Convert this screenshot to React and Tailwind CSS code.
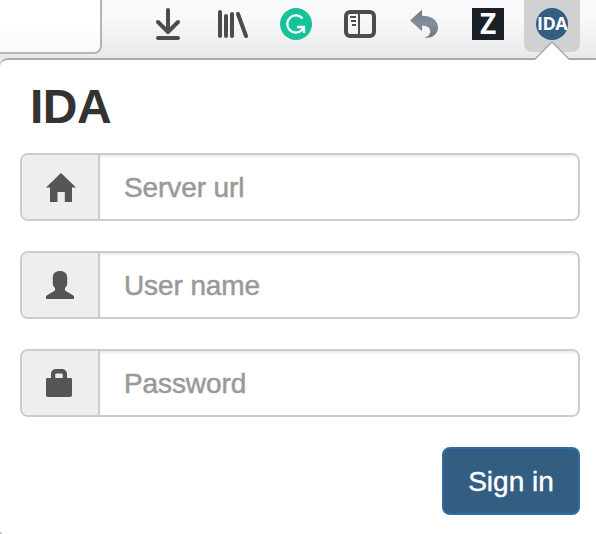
import React from "react";

function DownloadIcon() {
  return (
    <svg className="size-8" viewBox="0 0 32 32" fill="none" stroke="#4c4c4e" strokeWidth="4" strokeLinecap="round" strokeLinejoin="round">
      <path d="M16 2v22M6 14l10 10 10-10M6 30h20" />
    </svg>
  );
}

function LibraryIcon() {
  return (
    <svg className="size-8" viewBox="0 0 32 32" fill="none" stroke="#4c4c4e" strokeWidth="4" strokeLinecap="round">
      <path d="M4 4v24M10 8v20M16 6v22M22 6l8 22" />
    </svg>
  );
}

function GrammarIcon() {
  return (
    <svg className="size-8" viewBox="0 0 32 32" fill="none" stroke="#fff" strokeWidth="2.3">
      <circle cx="16" cy="16" r="16" fill="#15c39a" stroke="none" />
      <path d="M22.500 10.500A8.600 8.600 0 1 0 22 22L24 19" />
      <path d="M17 19h7v6" />
    </svg>
  );
}

function SidebarIcon() {
  return (
    <svg className="size-8" viewBox="0 0 32 32" fill="none" stroke="#4c4c4e">
      <rect x="2" y="4" width="28" height="24" rx="4" strokeWidth="4" />
      <path d="M15 5v22M6 9h6M7 13h5M8 17h4" strokeWidth="2" />
    </svg>
  );
}

function UndoIcon() {
  return (
    <svg className="size-8" viewBox="0 0 32 32">
      <defs>
        <linearGradient id="undo" x1="0" y1="0" x2="0" y2="1">
          <stop offset="0" stopColor="#687684" />
          <stop offset="0.5" stopColor="#84919d" />
          <stop offset="1" stopColor="#6b7884" />
        </linearGradient>
      </defs>
      <path d="M2 12.500 14 1.800V7.700C23 7.700 30 12 30 19.500 30 26.500 23.500 31 16.300 29.300 20 29 22.200 27 22.200 23.500 22.200 19.300 19 17.700 14 17.700V23Z" fill="url(#undo)" />
    </svg>
  );
}

function HomeIcon() {
  return (
    <svg className="h-[29px] w-[30px]" viewBox="0 0 30 29" fill="#555">
      <path d="M15 0 30 14.500h-4V29h-7.200V19h-7.300v10H4V14.500H0Z" />
    </svg>
  );
}

function UserIcon() {
  return (
    <svg className="mr-0.5 h-7 w-7" viewBox="0 0 28 28" fill="#555">
      <path d="M14 0c4.500 0 7.200 2.500 7.200 6.500v5.500c0 2.300-.8 4-2.200 5v2.500L26.500 24c1 .6 1.500 1 1.500 1.500V28H0v-2.500c0-.5.5-.9 1.500-1.500L9 19.500V17c-1.400-1-2.200-2.700-2.200-5V6.500C6.800 2.500 9.500 0 14 0Z" />
    </svg>
  );
}

function LockIcon() {
  return (
    <svg className="mr-1 h-7 w-[26px]" viewBox="0 0 26 28" fill="#555">
      <path fillRule="evenodd" d="M5 9V5c0-2.800 2.200-5 5-5h6c2.800 0 5 2.200 5 5v4h3.500c1 0 1.500.6 1.500 1.500V26c0 1.300-.7 2-2 2H2c-1.300 0-2-.7-2-2V10.500C0 9.600.5 9 1.500 9Zm4.300 0h7.400V5.500c0-.7-.4-1-1-1h-5.400c-.6 0-1 .3-1 1Z" />
    </svg>
  );
}

function Toolbar() {
  return (
    <header className="flex h-[58px] bg-linear-to-b from-[#f9f9fa] from-30% to-[#e9e9e9]">
      <div className="h-[54px] w-[102px] shrink-0 rounded-br-lg border-r-2 border-b-2 border-[#b5b5b5] bg-linear-to-b from-white from-50% to-[#f9f9f9]" />
      <div className="ml-[50px] flex h-12 items-center gap-8">
        <DownloadIcon />
        <LibraryIcon />
        <GrammarIcon />
        <SidebarIcon />
        <UndoIcon />
        <div className="flex size-8 items-center justify-center bg-[#1b2028] pb-[3px] font-['Open_Sans',sans-serif] text-[28px] leading-none font-bold text-white">
          Z
        </div>
      </div>
      <div className="ml-5 flex h-[52px] w-14 justify-center rounded-b-lg bg-[#d1d1d1] pt-2">
        <div className="flex size-8 items-center justify-center overflow-hidden rounded-full bg-[#335d81] pb-0.5 font-['Open_Sans',sans-serif] text-[18px] leading-none font-bold tracking-[-0.6px] text-white">
          IDA
        </div>
      </div>
    </header>
  );
}

function Field({ icon, label, type }) {
  return (
    <label className="flex h-[68px] overflow-hidden rounded-lg border-2 border-[#ccc]">
      <span className="flex w-[78px] shrink-0 items-center justify-center border-r-2 border-[#ccc] bg-[#eee] pl-0.5">{icon}</span>
      <input
        type={type}
        placeholder={label}
        className="min-w-0 flex-1 bg-white px-6 pt-0.5 text-[28px] tracking-[-0.1px] text-[#555] shadow-[inset_0_2px_2px_rgba(0,0,0,0.075)] outline-none placeholder:text-[#999] placeholder:[-webkit-text-stroke:0.5px_#999]"
      />
    </label>
  );
}

export default function App() {
  return (
    <div className="h-[534px] w-[596px] overflow-hidden bg-[#ececec] font-['Liberation_Sans',Arial,sans-serif]">
      <Toolbar />
      <main className="relative h-[476px] rounded-tl-lg border-t-2 border-[#aaa] bg-white pr-4 pl-5">
        <svg className="absolute -top-[19px] left-[534px] h-[20px] w-9" viewBox="0 0 36 20">
          <path d="M0 20 2 18 18 1 34 18l2 2Z" fill="#fff" />
          <path d="M1 18 18 1 35 18" fill="none" stroke="#aaa" strokeWidth="1.500" />
        </svg>
        <h1 className="pt-[19px] pl-2.5 text-[48px] leading-[56px] font-bold tracking-[-0.5px] text-[#333]">IDA</h1>
        <form className="mt-[18px] flex flex-col gap-[30px]">
          <Field icon={<HomeIcon />} label="Server url" type="text" />
          <Field icon={<UserIcon />} label="User name" type="text" />
          <Field icon={<LockIcon />} label="Password" type="password" />
          <button type="button" className="h-[68px] w-[138px] self-end rounded-lg border-2 border-[#2e6da4] bg-[#335d81] pt-0.5 text-[28px] text-white [-webkit-text-stroke:0.4px_#fff]">
            Sign in
          </button>
        </form>
        <div className="absolute bottom-0 left-0 size-0.5 rounded-tr-sm bg-[#bbb]" />
      </main>
    </div>
  );
}
